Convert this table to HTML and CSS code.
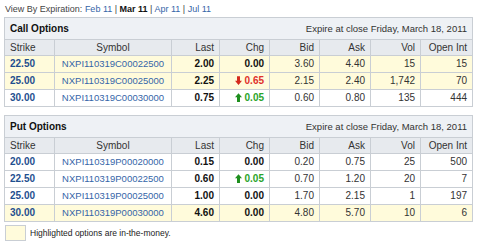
FILE: index.html
```html
<!DOCTYPE html>
<html lang="en">
<head>
  <meta charset="UTF-8" />
  <title>Options</title>
  <link rel="stylesheet" href="styles.css">
</head>
<body>
  <div class="expiry-nav">
    View By Expiration: <a href="#">Feb 11</a> | <strong>Mar 11</strong> | <a href="#">Apr 11</a> | <a href="#">Jul 11</a>
  </div>

  <table class="chain">
    <colgroup>
      <col class="c-strike"><col class="c-sym"><col class="c-last"><col class="c-chg"><col class="c-bid"><col class="c-ask"><col class="c-vol"><col class="c-oi">
    </colgroup>
    <tr class="caption">
      <th colspan="3" class="title">Call Options</th>
      <th colspan="5" class="expire">Expire at close Friday, March 18, 2011</th>
    </tr>
    <tr class="cols">
      <th class="left">Strike</th><th class="center">Symbol</th><th>Last</th><th>Chg</th><th>Bid</th><th>Ask</th><th>Vol</th><th>Open Int</th>
    </tr>
    <tr class="itm">
      <td class="strike"><a href="#">22.50</a></td><td class="sym"><a href="#">NXPI110319C00022500</a></td><td class="last">2.00</td><td class="chg">0.00</td><td>3.60</td><td>4.40</td><td>15</td><td>15</td>
    </tr>
    <tr class="itm">
      <td class="strike"><a href="#">25.00</a></td><td class="sym"><a href="#">NXPI110319C00025000</a></td><td class="last">2.25</td><td class="chg down"><svg class="arrow" width="7" height="9" viewBox="0 0 8 10"><path d="M2.3 0h3.4v5.2H8L4 10 0 5.2h2.3z"/></svg> 0.65</td><td>2.15</td><td>2.40</td><td>1,742</td><td>70</td>
    </tr>
    <tr>
      <td class="strike"><a href="#">30.00</a></td><td class="sym"><a href="#">NXPI110319C00030000</a></td><td class="last">0.75</td><td class="chg up"><svg class="arrow" width="7" height="9" viewBox="0 0 8 10"><path d="M2.3 10h3.4V4.8H8L4 0 0 4.8h2.3z"/></svg> 0.05</td><td>0.60</td><td>0.80</td><td>135</td><td>444</td>
    </tr>
  </table>

  <table class="chain">
    <colgroup>
      <col class="c-strike"><col class="c-sym"><col class="c-last"><col class="c-chg"><col class="c-bid"><col class="c-ask"><col class="c-vol"><col class="c-oi">
    </colgroup>
    <tr class="caption">
      <th colspan="3" class="title">Put Options</th>
      <th colspan="5" class="expire">Expire at close Friday, March 18, 2011</th>
    </tr>
    <tr class="cols">
      <th class="left">Strike</th><th class="center">Symbol</th><th>Last</th><th>Chg</th><th>Bid</th><th>Ask</th><th>Vol</th><th>Open Int</th>
    </tr>
    <tr>
      <td class="strike"><a href="#">20.00</a></td><td class="sym"><a href="#">NXPI110319P00020000</a></td><td class="last">0.15</td><td class="chg">0.00</td><td>0.20</td><td>0.75</td><td>25</td><td>500</td>
    </tr>
    <tr>
      <td class="strike"><a href="#">22.50</a></td><td class="sym"><a href="#">NXPI110319P00022500</a></td><td class="last">0.60</td><td class="chg up"><svg class="arrow" width="7" height="9" viewBox="0 0 8 10"><path d="M2.3 10h3.4V4.8H8L4 0 0 4.8h2.3z"/></svg> 0.05</td><td>0.70</td><td>1.20</td><td>20</td><td>7</td>
    </tr>
    <tr>
      <td class="strike"><a href="#">25.00</a></td><td class="sym"><a href="#">NXPI110319P00025000</a></td><td class="last">1.00</td><td class="chg">0.00</td><td>1.70</td><td>2.15</td><td>1</td><td>197</td>
    </tr>
    <tr class="itm">
      <td class="strike"><a href="#">30.00</a></td><td class="sym"><a href="#">NXPI110319P00030000</a></td><td class="last">4.60</td><td class="chg">0.00</td><td>4.80</td><td>5.70</td><td>10</td><td>6</td>
    </tr>
  </table>

  <div class="legend">
    <span class="swatch"></span>
    Highlighted options are in-the-money.
  </div>
</body>
</html>
```

FILE: styles.css
```css
:root {
  --border: #c9ced4;
  --head-bg: #eef1f5;
  --cols-bg: #e7eaee;
  --itm: #fffbdb;
  --link: #3565a8;
  --strike: #1f4f8f;
  --text: #333;
}

body {
  margin: 0;
  padding: 3px 4px 0;
  font-family: Arial, "Liberation Sans", sans-serif;
  font-size: 10px;
  color: var(--text);
  background: #fff;
}

a {
  color: var(--link);
  text-decoration: none;
}

.expiry-nav {
  height: 14px;
  line-height: 12px;
  padding-left: 1px;
  font-size: 9px;
  color: #444;
}
.expiry-nav strong {
  color: #111;
}

.chain {
  width: 468px;
  border-collapse: collapse;
  table-layout: fixed;
  margin-bottom: 8px;
  border: 1px solid var(--border);
}
.c-strike { width: 50px; }
.c-sym { width: 117px; }
.c-last { width: 48px; }
.c-chg { width: 50px; }
.c-bid { width: 50px; }
.c-ask { width: 51px; }
.c-vol { width: 50px; }
.c-oi { width: 52px; }

.chain th,
.chain td {
  border: 1px solid var(--border);
  padding: 2px 5px;
  height: 12px;
  line-height: 12px;
  text-align: right;
  white-space: nowrap;
  font-weight: normal;
}

.caption th {
  background: var(--head-bg);
  height: 17px;
  border-left: none;
  border-right: none;
}
.caption .title {
  text-align: left;
  font-size: 10px;
  font-weight: bold;
  color: #111;
}
.caption .expire {
  font-size: 9.5px;
  color: #333;
}

.cols th {
  height: 11px;
  line-height: 11px;
  background: var(--cols-bg);
  color: #333;
}
.cols .left { text-align: left; }
.cols .center { text-align: center; }

.itm td {
  background: var(--itm);
}

.chain td.strike {
  text-align: left;
  font-weight: bold;
}
.strike a {
  color: var(--strike);
}
.chain td.sym {
  padding: 2px 1px;
  text-align: center;
  font-size: 9.5px;
}
.chain td.last,
.chain td.chg {
  font-weight: bold;
  color: #111;
}
.chain td.down { color: #e0302c; }
.chain td.up { color: #2aa42a; }

.arrow {
  vertical-align: -1px;
}
.down .arrow { fill: #d42a1e; }
.up .arrow { fill: #1e8f1e; }

.legend {
  display: flex;
  align-items: center;
  gap: 4px;
  margin-top: -5px;
  padding-left: 1px;
  font-size: 8.5px;
  color: #222;
}
.swatch {
  width: 19px;
  height: 14px;
  background: var(--itm);
  border: 1px solid var(--border);
}
```
